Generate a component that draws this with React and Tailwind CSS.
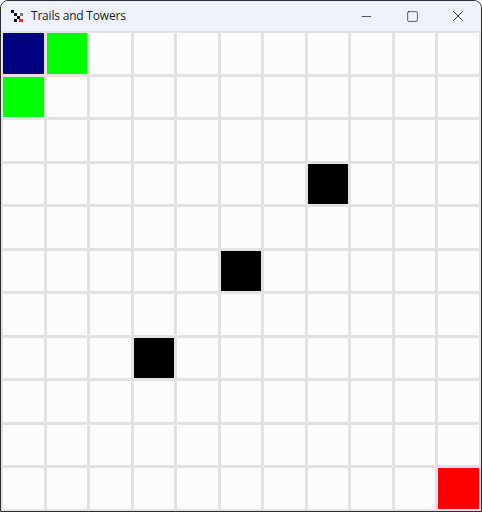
import { Minus, Square, X } from "lucide-react";

const SIZE = 11;

// special cells: [row, col] -> colour class
const special = {
  "0-0": "bg-[#000080]",
  "0-1": "bg-[#00ff00]",
  "1-0": "bg-[#00ff00]",
  "3-7": "bg-black",
  "5-5": "bg-black",
  "7-3": "bg-black",
  "10-10": "bg-[#ff0000]",
};

const AppIcon = () => (
  <svg width="14" height="14" viewBox="0 0 14 14" shapeRendering="crispEdges">
    <rect x="1" y="1" width="3" height="3" fill="#000080" />
    <rect x="4" y="4" width="3" height="3" fill="#111" />
    <rect x="7" y="7" width="3" height="3" fill="#111" />
    <rect x="4" y="10" width="3" height="3" fill="#111" />
    <rect x="10" y="4" width="3" height="3" fill="#777" />
    <rect x="9" y="10" width="4" height="3" fill="#e03030" />
  </svg>
);

export default function App() {
  const cells = [];
  for (let r = 0; r < SIZE; r++) {
    for (let c = 0; c < SIZE; c++) {
      const cls = special[`${r}-${c}`] || "bg-[#fcfcfc]";
      cells.push(<div key={`${r}-${c}`} className={cls} />);
    }
  }

  return (
    <div className="w-[482px] h-[512px] flex flex-col border border-[#2e2e2e] rounded-t-lg overflow-hidden bg-[#e2e2e2]" style={{ fontFamily: '"Open Sans", "Liberation Sans", sans-serif' }}>
      <div className="h-[30px] flex items-center bg-[#eef2f8] shrink-0">
        <div className="pl-[9px] pr-[7px] flex items-center">
          <AppIcon />
        </div>
        <span className="text-[12px] tracking-[-0.2px] text-[#1a1a1a]">Trails and Towers</span>
        <div className="ml-auto flex h-full">
          <div className="w-[46px] flex items-center justify-center text-[#111]">
            <Minus size={15} strokeWidth={1.1} />
          </div>
          <div className="w-[46px] flex items-center justify-center text-[#111]">
            <Square size={13} strokeWidth={1.2} />
          </div>
          <div className="w-[46px] flex items-center justify-center text-[#111]">
            <X size={18} strokeWidth={1.1} />
          </div>
        </div>
      </div>
      <div className="flex-1 p-[2px] grid grid-cols-11 grid-rows-11 gap-[3px]">
        {cells}
      </div>
    </div>
  );
}
